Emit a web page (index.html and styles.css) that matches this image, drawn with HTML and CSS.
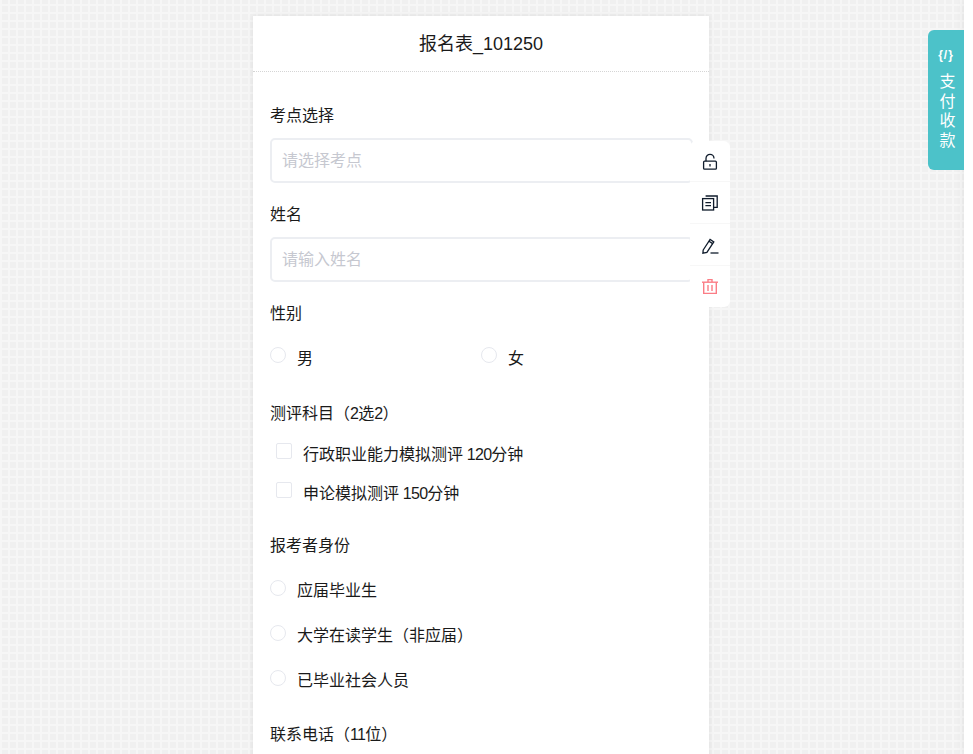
FILE: index.html
```html
<!DOCTYPE html>
<html lang="zh-CN">
<head>
<meta charset="utf-8">
<title>报名表_101250</title>
<link rel="stylesheet" href="styles.css">
</head>
<body>
<main class="card">
  <header class="title">报名表_101250</header>
  <form class="form">
    <section class="field first">
      <div class="label">考点选择</div>
      <div class="input">请选择考点</div>
    </section>
    <section class="field">
      <div class="label">姓名</div>
      <div class="input">请输入姓名</div>
    </section>
    <section class="field">
      <div class="label">性别</div>
      <div class="radios-inline">
        <div class="opt"><i class="radio"></i><span>男</span></div>
        <div class="opt"><i class="radio"></i><span>女</span></div>
      </div>
    </section>
    <section class="field subjects">
      <div class="label">测评科目（<span class="num">2</span>选<span class="num">2</span>）</div>
      <div class="chk"><i class="box"></i><span>行政职业能力模拟测评<span class="num"> 120</span>分钟</span></div>
      <div class="chk"><i class="box"></i><span>申论模拟测评<span class="num"> 150</span>分钟</span></div>
    </section>
    <section class="field identity">
      <div class="label">报考者身份</div>
      <div class="opt row"><i class="radio"></i><span>应届毕业生</span></div>
      <div class="opt row"><i class="radio"></i><span>大学在读学生（非应届）</span></div>
      <div class="opt row"><i class="radio"></i><span>已毕业社会人员</span></div>
    </section>
    <section class="field phone">
      <div class="label">联系电话（<span class="num">11</span>位）</div>
    </section>
  </form>
  <aside class="tools">
    <div class="tool">
      <svg width="18" height="18" viewBox="0 0 18 18" fill="none" stroke="#101c2c" stroke-width="1.3"><rect x="2.6" y="8.2" width="12.8" height="8" rx="1"/><path d="M5 8.2V5.4a4 4 0 0 1 8 0"/><path d="M9 11v2.4"/></svg>
    </div>
    <div class="tool">
      <svg width="18" height="18" viewBox="0 0 18 18" fill="none" stroke="#101c2c" stroke-width="1.3"><rect x="1.6" y="4.6" width="11" height="11.4"/><path d="M4.6 2h11.6v11.4h-3.6"/><path d="M4.4 8.6h5.6M4.4 11.6h5.6"/></svg>
    </div>
    <div class="tool">
      <svg width="18" height="18" viewBox="0 0 18 18" fill="none" stroke="#101c2c" stroke-width="1.3"><path d="M2.2 14l6.9-10.5 3.7 2.4-6.9 10.5-4 .8z"/><path d="M8 5.2l3.7 2.4"/><path d="M9.5 17h8"/></svg>
    </div>
    <div class="tool">
      <svg width="18" height="18" viewBox="0 0 18 18" fill="none" stroke="#fb7d86" stroke-width="1.4"><path d="M1 4.2h16"/><path d="M7 4V1.6h4V4"/><path d="M2.7 4.2v11.2h12.6V4.2"/><path d="M7 7v6M11 7v6"/></svg>
    </div>
  </aside>
</main>
<aside class="pay">
  <div class="pay-mark">{/}</div>
  <div class="pay-text">支<br>付<br>收<br>款</div>
</aside>
</body>
</html>
```
FILE: styles.css
```css
* { box-sizing: border-box; }
html, body { height: 100%; }
body {
  margin: 0;
  height: 754px;
  overflow: hidden;
  font-family: "Liberation Sans", "Noto Sans CJK SC", sans-serif;
  color: #1a1a1a;
  font-size: 16px;
  background-color: #f0f0f0;
  background-image:
    linear-gradient(#f6f6f6 2px, transparent 2px),
    linear-gradient(90deg, #f6f6f6 2px, transparent 2px);
  background-size: 8px 8px;
  background-position: 0 4px;
}
body::after {
  content: "";
  position: fixed;
  top: 0; right: 0; bottom: 0;
  width: 9px;
  background: #fff;
  box-shadow: 0 0 8px rgba(0,0,0,.08);
}
.card {
  position: relative;
  width: 456px;
  margin: 16px 0 0 253px;
  background: #fff;
  height: 760px;
  box-shadow: 0 0 6px rgba(0,0,0,.08);
}
.title {
  height: 56px;
  line-height: 56px;
  text-align: center;
  font-size: 18px;
  border-bottom: 1px dotted #d5d5d5;
}
.form { padding: 0 17px; }
.field { padding-top: 20px; }
.field.first { padding-top: 32px; }
.label { line-height: 24px; height: 22px; }
.num { letter-spacing: -0.7px; }
.input {
  margin-top: 12px;
  width: 423px;
  height: 45px;
  line-height: 41px;
  padding-left: 10px;
  border: 2px solid #eceef2;
  border-radius: 5px;
  color: #c6c8d0;
}
.radios-inline { display: flex; margin-top: 22px; }
.radios-inline .opt { width: 211px; }
.opt { display: flex; align-items: flex-start; height: 36px; }
.opt span { margin: 1px 0 0 11px; line-height: 24px; }
.row span { margin-top: 0; }
.radio {
  width: 16px; height: 16px;
  border: 1.5px solid #e6e8ee;
  border-radius: 50%;
  margin-top: 1px;
}
.chk { display: flex; align-items: flex-start; height: 39px; padding-left: 6px; }
.subjects .label + .chk { margin-top: 18px; }
.box {
  width: 16px; height: 16px;
  border: 1.5px solid #e6e8ee;
  border-radius: 2px;
  margin-top: 1px;
}
.chk span { margin: 2px 0 0 11px; line-height: 22px; }
.chk .num { margin: 0; }
.identity { padding-top: 14px; }
.row { height: 45px; }
.identity .label + .row { margin-top: 23px; }
.phone { padding-top: 9px; }
.tools {
  position: absolute;
  left: 437px;
  top: 125px;
  width: 40px;
  height: 166px;
  background: #fff;
  border-radius: 6px;
}
.tool {
  height: 42px;
  padding-top: 12px;
  display: flex;
  align-items: flex-start;
  justify-content: center;
  border-bottom: 1px solid #f7f7f7;
}
.tool:first-child, .tool:last-child { height: 41px; }
.tool:last-child { border-bottom: 0; }
.pay {
  position: absolute;
  left: 928px;
  top: 30px;
  width: 36px;
  height: 140px;
  background: #4cc2c9;
  border-radius: 6px 0 0 6px;
  color: #fff;
  text-align: center;
  z-index: 2;
}
.pay-mark { margin-top: 17px; font-size: 12px; line-height: 16px; letter-spacing: 1px; font-weight: bold; }
.pay-text { margin-top: 9px; padding-left: 3px; font-size: 16px; line-height: 19.6px; }
```
